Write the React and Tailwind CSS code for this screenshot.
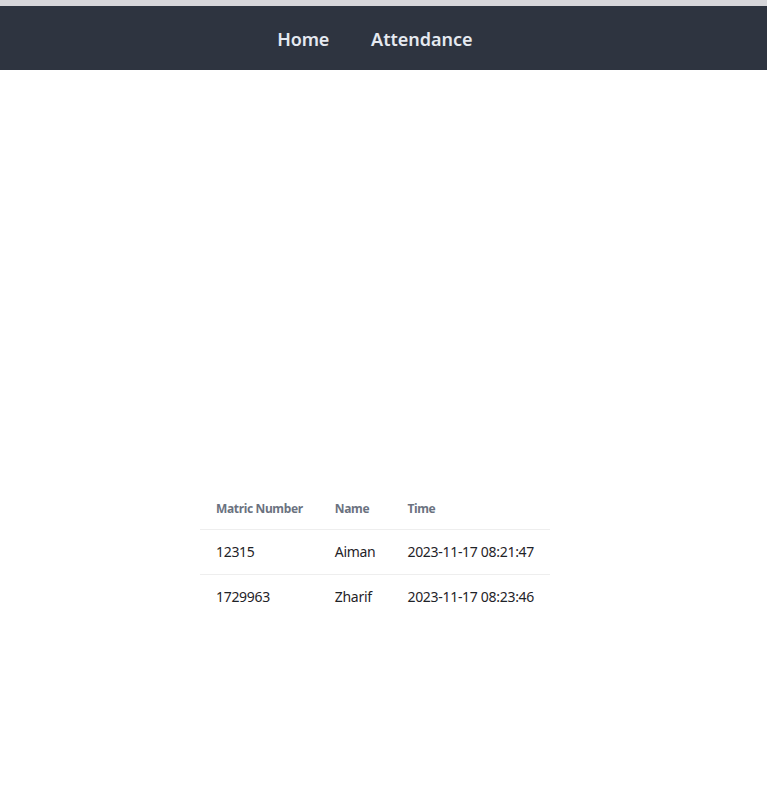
export default function App() {
  const rows = [
    { m: "12315", n: "Aiman", t: "2023-11-17 08:21:47" },
    { m: "1729963", n: "Zharif", t: "2023-11-17 08:23:46" },
  ];
  return (
    <div className="min-h-[793px] bg-white" style={{ fontFamily: '"Noto Sans", "Open Sans", sans-serif' }}>
      <div className="h-[6px] bg-[#d6d6da]" />
      <nav className="h-[64px] bg-[#2e3440] flex items-center justify-center gap-[42px] pr-[17px] pt-[3px]">
        <a className="text-[18px] font-semibold text-[#e5e9f0] tracking-[-0.2px]">Home</a>
        <a className="text-[18px] font-semibold text-[#e5e9f0]">Attendance</a>
      </nav>
      <div className="flex justify-center pt-[420px] pr-[17px]">
        <table className="text-left">
          <thead>
            <tr className="border-b border-[#eeeeee]">
              <th className="px-4 h-[39px] text-[12px] font-bold text-[#6b7280] tracking-[-0.35px]">Matric Number</th>
              <th className="px-4 h-[39px] text-[12px] font-bold text-[#6b7280] tracking-[-0.35px]">Name</th>
              <th className="px-4 h-[39px] text-[12px] font-bold text-[#6b7280] tracking-[-0.35px]">Time</th>
            </tr>
          </thead>
          <tbody>
            {rows.map((r, i) => (
              <tr key={i} className={i === 0 ? "border-b border-[#eeeeee]" : ""}>
                <td className="px-4 h-[45px] text-[14px] text-[#1f2328] tracking-[-0.3px]">{r.m}</td>
                <td className="px-4 h-[45px] text-[14px] text-[#1f2328] tracking-[-0.3px]">{r.n}</td>
                <td className="px-4 h-[45px] text-[14px] text-[#1f2328] tracking-[-0.3px]">{r.t}</td>
              </tr>
            ))}
          </tbody>
        </table>
      </div>
    </div>
  );
}
